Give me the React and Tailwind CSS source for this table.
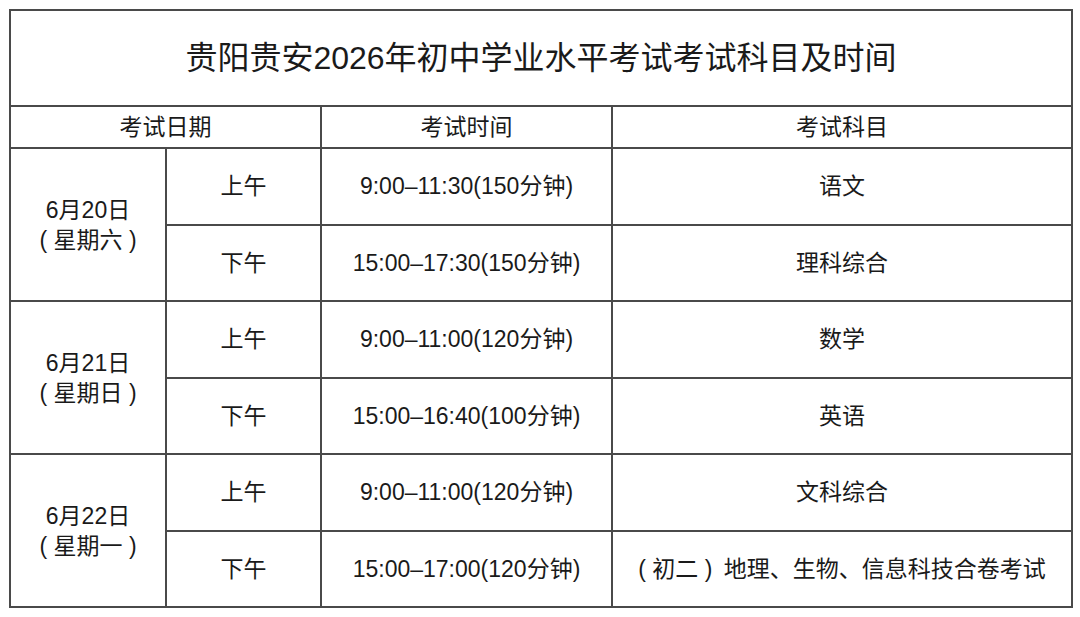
import React from "react";

const days = [
  {
    date: "6月20日",
    week: "( 星期六 )",
    rows: [
      { part: "上午", time: "9:00–11:30(150分钟)", subject: "语文" },
      { part: "下午", time: "15:00–17:30(150分钟)", subject: "理科综合" },
    ],
  },
  {
    date: "6月21日",
    week: "( 星期日 )",
    rows: [
      { part: "上午", time: "9:00–11:00(120分钟)", subject: "数学" },
      { part: "下午", time: "15:00–16:40(100分钟)", subject: "英语" },
    ],
  },
  {
    date: "6月22日",
    week: "( 星期一 )",
    rows: [
      { part: "上午", time: "9:00–11:00(120分钟)", subject: "文科综合" },
      { part: "下午", time: "15:00–17:00(120分钟)", subject: "( 初二 )\u2002地理、生物、信息科技合卷考试" },
    ],
  },
];

const cell = "border-2 border-[#4a4a4a] text-center align-middle";

export default function App() {
  return (
    <div
      className="w-[1080px] h-[617px] bg-white pl-[9px] pt-[9px] text-[#1a1a1a]"
      style={{ fontFamily: '"Liberation Sans", "Noto Sans CJK SC", sans-serif' }}
    >
      <table className="w-[1062px] border-collapse table-fixed text-[23px]">
        <colgroup>
          <col className="w-[156px]" />
          <col className="w-[155px]" />
          <col className="w-[291px]" />
          <col className="w-[460px]" />
        </colgroup>
        <tbody>
          <tr className="h-[96px]">
            <td colSpan={4} className={`${cell} text-[32px]`}>
              贵阳贵安2026年初中学业水平考试考试科目及时间
            </td>
          </tr>
          <tr className="h-[42px]">
            <td colSpan={2} className={cell}>考试日期</td>
            <td className={cell}>考试时间</td>
            <td className={cell}>考试科目</td>
          </tr>
          {days.map((d) =>
            d.rows.map((r, i) => (
              <tr key={d.date + r.part} className="h-[76.5px]">
                {i === 0 && (
                  <td rowSpan={2} className={`${cell} leading-[30px]`}>
                    <div>{d.date}</div>
                    <div className="whitespace-pre">{d.week}</div>
                  </td>
                )}
                <td className={cell}>{r.part}</td>
                <td className={cell}>{r.time}</td>
                <td className={`${cell} whitespace-pre`}>{r.subject}</td>
              </tr>
            ))
          )}
        </tbody>
      </table>
    </div>
  );
}
